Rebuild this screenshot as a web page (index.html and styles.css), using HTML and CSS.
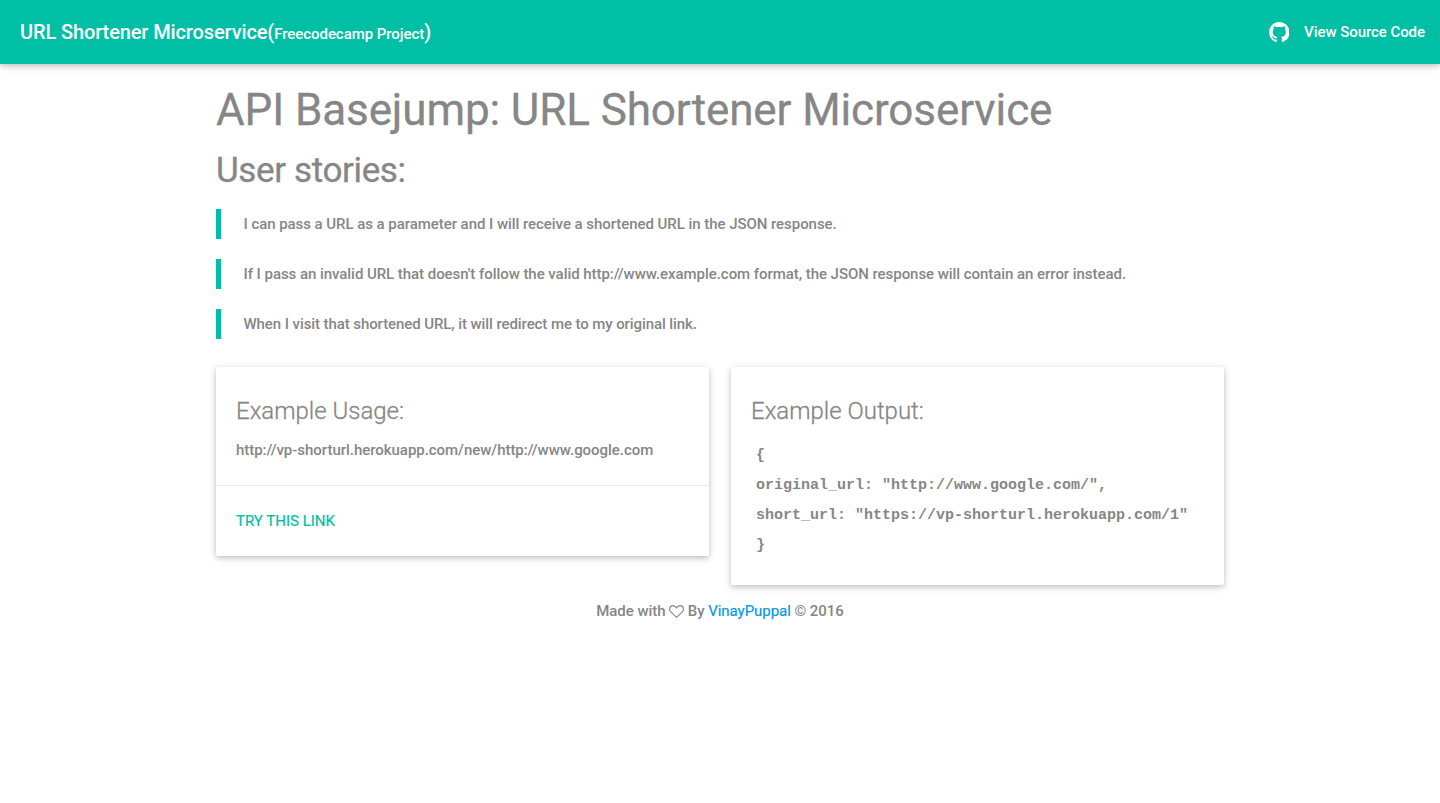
FILE: index.html
```html
<!DOCTYPE html>
<html lang="en">
<head>
<meta charset="utf-8">
<title>URL Shortener Microservice</title>
<link rel="stylesheet" href="styles.css">
</head>
<body>
<nav class="navbar">
  <a class="brand">URL Shortener Microservice(<span class="brand-note">Freecodecamp Project</span>)</a>
  <a class="source"><svg class="github" viewBox="0 0 16 16" aria-hidden="true"><path d="M8 0C3.58 0 0 3.58 0 8c0 3.54 2.29 6.53 5.47 7.59.4.07.55-.17.55-.38 0-.19-.01-.82-.01-1.49-2.01.37-2.53-.49-2.69-.94-.09-.23-.48-.94-.82-1.13-.28-.15-.68-.52-.01-.53.63-.01 1.08.58 1.23.82.72 1.21 1.87.87 2.33.66.07-.52.28-.87.51-1.07-1.78-.2-3.64-.89-3.64-3.95 0-.87.31-1.59.82-2.15-.08-.2-.36-1.02.08-2.12 0 0 .67-.21 2.2.82.64-.18 1.32-.27 2-.27s1.36.09 2 .27c1.53-1.04 2.2-.82 2.2-.82.44 1.1.16 1.92.08 2.12.51.56.82 1.27.82 2.15 0 3.07-1.87 3.75-3.65 3.95.29.25.54.73.54 1.48 0 1.07-.01 1.93-.01 2.2 0 .21.15.46.55.38A8.01 8.01 0 0 0 16 8c0-4.42-3.58-8-8-8z"/></svg><span>View Source Code</span></a>
</nav>
<main class="container">
  <h1 class="title">API Basejump: URL Shortener Microservice</h1>
  <h2 class="subtitle">User stories:</h2>
  <blockquote class="story">I can pass a URL as a parameter and I will receive a shortened URL in the JSON response.</blockquote>
  <blockquote class="story">If I pass an invalid URL that doesn't follow the valid http://www.example.com format, the JSON response will contain an error instead.</blockquote>
  <blockquote class="story story-last">When I visit that shortened URL, it will redirect me to my original link.</blockquote>
  <div class="cards">
    <section class="card">
      <div class="card-content">
        <h3 class="card-title">Example Usage:</h3>
        <p class="usage">http://vp-shorturl.herokuapp.com/new/http://www.google.com</p>
      </div>
      <div class="card-action"><a class="try-link">Try this link</a></div>
    </section>
    <section class="card">
      <div class="card-content">
        <h3 class="card-title">Example Output:</h3>
        <pre class="output">{
original_url: "http://www.google.com/",
short_url: "https://vp-shorturl.herokuapp.com/1"
}</pre>
      </div>
    </section>
  </div>
</main>
<footer class="footer">Made with <svg class="heart" viewBox="0 0 15 13" aria-hidden="true"><path d="M7.500 12.400 1.800 6.900C-.2 4.900.3.600 3.900.600 5.700.600 6.800 1.900 7.500 2.800 8.200 1.900 9.300.600 11.100.600 14.700.600 15.200 4.900 13.200 6.900Z"/></svg> By <a class="author">VinayPuppal</a> © 2016</footer>
</body>
</html>
```
FILE: styles.css
```css
* { box-sizing: border-box; }
body {
  margin: 0;
  background: #fff;
  color: #868686;
  font: 500 15px/22.5px Roboto, sans-serif;
}
h1, h2, h3, p, pre, blockquote { margin: 0; font-weight: 400; }
.navbar {
  display: flex;
  justify-content: space-between;
  height: 64px;
  padding: 0 15px 0 20px;
  line-height: 64px;
  color: #fff;
  background: #00bfa5;
  box-shadow: 0 2px 5px rgba(0,0,0,.16), 0 2px 10px rgba(0,0,0,.12);
}
.brand { font-size: 20px; letter-spacing: -.12px; }
.brand-note { font-size: 15px; letter-spacing: -.05px; }
.source { display: flex; align-items: center; gap: 15px; letter-spacing: -.06px; }
.github { width: 20.5px; height: 20.5px; fill: #fff; }
.container { width: 1008px; margin: 0 auto; }
.title { padding-top: 22px; font-size: 44px; line-height: 48px; letter-spacing: -.11px; -webkit-text-stroke: .3px; }
.subtitle { margin-top: 18px; font-size: 35px; line-height: 38px; letter-spacing: -.37px; -webkit-text-stroke: .3px; }
.story {
  height: 30px;
  margin-top: 20px;
  padding-left: 22.5px;
  border-left: 5px solid #00bfa5;
  line-height: 30px;
  font-weight: 500;
  letter-spacing: -.05px;
}
.subtitle + .story { margin-top: 19px; }
.story-last { letter-spacing: -.085px; }
.cards { display: flex; align-items: flex-start; justify-content: space-between; margin-top: 28px; }
.card {
  width: 493px;
  border-radius: 2px;
  background: #fff;
  box-shadow: 0 2px 5px rgba(0,0,0,.16), 0 2px 10px rgba(0,0,0,.12);
}
.card-content { padding: 20px; }
.card-title { font-size: 24px; font-weight: 300; line-height: 48px; -webkit-text-stroke: .3px; }
.usage { line-height: 30px; font-weight: 500; letter-spacing: -.035px; }
.card-action { padding: 20px; border-top: 1px solid #e8e8e8; line-height: 30px; }
.try-link { color: #00bfa5; text-transform: uppercase; font-weight: 400; -webkit-text-stroke: .2px; }
.output { padding: 6px 5px 4px; font: 700 15px/30px "Liberation Mono", monospace; }
.footer { margin-top: 15px; text-align: center; letter-spacing: -.05px; }
.heart { width: 15px; height: 13px; vertical-align: -2px; fill: none; stroke: #868686; stroke-width: 1.1; }
.author { color: #039be5; font-weight: 400; -webkit-text-stroke: .2px; }
```
